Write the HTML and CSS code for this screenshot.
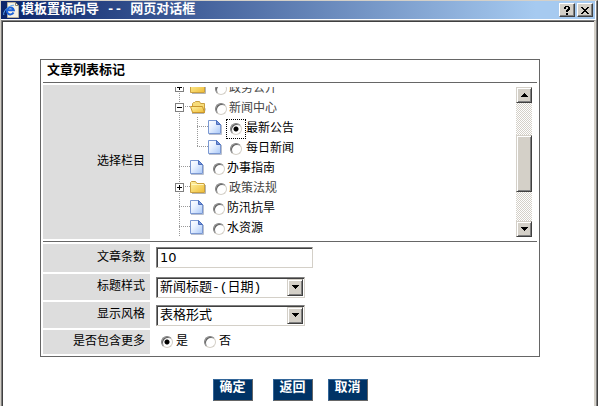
FILE: index.html
```
<!DOCTYPE html>
<html lang="zh-CN">
  <head>
    <meta charset="UTF-8" />
    <meta name="viewport" content="width=device-width, initial-scale=1.0" />
    <title>模板置标向导</title>
    <link rel="stylesheet" href="styles.css">
  </head>
  <body>
    <svg class="sprite" aria-hidden="true">
      <defs>
        <linearGradient id="paper" x1="0" y1="0" x2="1" y2="1">
          <stop offset="0" stop-color="#ffffff" />
          <stop offset="0.4" stop-color="#eaf2ff" />
          <stop offset="1" stop-color="#a9c8f8" />
        </linearGradient>
        <linearGradient id="gold" x1="0" y1="0" x2="1" y2="1">
          <stop offset="0" stop-color="#fff3a4" />
          <stop offset="1" stop-color="#efbd36" />
        </linearGradient>
      </defs>
      <symbol id="page" viewBox="0 0 16 16">
        <path d="M1 15.5h12.500V6" fill="none" stroke="#b9bfcc" />
        <path d="M.5 1.500h8l4 4v9H.500z" fill="url(#paper)" stroke="#7b98d2" />
        <path d="M8.500 1.500v4h4z" fill="#7795da" stroke="#4c6fbd" />
      </symbol>
      <symbol id="folder" viewBox="0 0 16 16">
        <path d="M2 14.500h13.500V6" fill="none" stroke="#b5b5b5" />
        <path d="M.5 13.500v-10l1-1h4l1.500 2h7l.5.500v8.500z" fill="url(#gold)" stroke="#c9a040" />
        <path d="M1.500 5.500h12" stroke="#fff7c4" />
      </symbol>
      <symbol id="folder-open" viewBox="0 0 16 16">
        <path d="M2 14.500h12l1.500-5" fill="none" stroke="#b5b5b5" />
        <path d="M2.500 13.500v-9l1-1h1l1-1h4l1 2h4v9z" fill="#f7dc78" stroke="#c9a040" />
        <path d="M.500 7.500h12l2 6h-12z" fill="url(#gold)" stroke="#c9962c" />
      </symbol>
      <symbol id="up" viewBox="0 0 7 4">
        <path d="M3 0h1v1h1v1h1v1h1v1H0V3h1V2h1V1h1z" />
      </symbol>
      <symbol id="down" viewBox="0 0 7 4">
        <path d="M0 0h7v1H6v1H5v1H4v1H3V3H2V2H1V1H0z" />
      </symbol>
    </svg>

    <div class="dialog">
      <header class="titlebar">
        <svg class="logo" viewBox="0 0 16 16" aria-hidden="true">
          <path d="M4.500.500h8l3 3v12h-11z" fill="#f4f1e6" stroke="#b5b09c" />
          <path d="M12.500.500v3h3z" fill="#fff" stroke="#8c8672" />
          <path d="M10.500 10.500a3.500 3.500 0 1 1 .3-2.300H4" fill="none" stroke="#1c62d8" stroke-width="2" />
          <path d="M.800 13C-.500 9.500 6 3 11 3.200" fill="none" stroke="#5aa7f5" />
        </svg>
        <h1>模板置标向导 -- 网页对话框</h1>
        <button type="button" class="winbtn" aria-label="帮助">
          <svg width="7" height="9" viewBox="0 0 7 9"><path d="M1 0h4v1h1v3H5v1H4v1H2V4h1V3h1V1H2v2H0V1h1zM2 7h2v2H2z" /></svg>
        </button>
        <button type="button" class="winbtn" aria-label="关闭">
          <svg width="8" height="7" viewBox="0 0 8 7"><path d="M0 0h2v1h1v1h2V1h1V0h2v1H7v1H6v1H5v1h1v1h1v1h1v1H6V6H5V5H3v1H2v1H0V6h1V5h1V4h1V3H2V2H1V1H0z" /></svg>
        </button>
      </header>

      <form class="content">
        <div class="panel">
          <h2>文章列表标记</h2>

          <div class="row row-tree">
            <div class="label" id="column-label">选择栏目</div>
            <div class="tree-box">
              <ul class="tree" role="radiogroup" aria-labelledby="column-label">
                <li class="node folder">
                  <button type="button" class="toggle plus" aria-label="展开"></button>
                  <svg class="icon"><use href="#folder" /></svg>
                  <label><input type="radio" name="column" />政务公开</label>
                </li>
                <li class="node folder">
                  <button type="button" class="toggle" aria-label="折叠"></button>
                  <svg class="icon"><use href="#folder-open" /></svg>
                  <label><input type="radio" name="column" />新闻中心</label>
                </li>
                <li class="branch">
                  <ul>
                    <li class="node">
                      <svg class="icon"><use href="#page" /></svg>
                      <label><span class="focus"><input type="radio" name="column" checked /></span>最新公告</label>
                    </li>
                    <li class="node last">
                      <svg class="icon"><use href="#page" /></svg>
                      <label><span class="focus-off"><input type="radio" name="column" /></span>每日新闻</label>
                    </li>
                  </ul>
                </li>
                <li class="node">
                  <svg class="icon"><use href="#page" /></svg>
                  <label><input type="radio" name="column" />办事指南</label>
                </li>
                <li class="node folder">
                  <button type="button" class="toggle plus" aria-label="展开"></button>
                  <svg class="icon"><use href="#folder" /></svg>
                  <label><input type="radio" name="column" />政策法规</label>
                </li>
                <li class="node">
                  <svg class="icon"><use href="#page" /></svg>
                  <label><input type="radio" name="column" />防汛抗旱</label>
                </li>
                <li class="node">
                  <svg class="icon"><use href="#page" /></svg>
                  <label><input type="radio" name="column" />水资源</label>
                </li>
              </ul>
              <div class="scrollbar">
                <button type="button" class="scroll-btn" aria-label="向上"><svg width="7" height="4"><use href="#up" /></svg></button>
                <div class="space-above"></div>
                <div class="thumb"></div>
                <div class="space-below"></div>
                <button type="button" class="scroll-btn" aria-label="向下"><svg width="7" height="4"><use href="#down" /></svg></button>
              </div>
            </div>
          </div>

          <div class="row">
            <label class="label" for="count">文章条数</label>
            <div class="field"><input type="text" id="count" value="10" /></div>
          </div>
          <div class="row">
            <label class="label" for="title-style">标题样式</label>
            <div class="field">
              <span class="select">
                <select id="title-style"><option>新闻标题-(日期)</option></select>
                <span class="arrow"><svg width="7" height="4"><use href="#down" /></svg></span>
              </span>
            </div>
          </div>
          <div class="row">
            <label class="label" for="display">显示风格</label>
            <div class="field">
              <span class="select">
                <select id="display"><option>表格形式</option></select>
                <span class="arrow"><svg width="7" height="4"><use href="#down" /></svg></span>
              </span>
            </div>
          </div>
          <div class="row row-more">
            <div class="label" id="more-label">是否包含更多</div>
            <div class="field radios" role="radiogroup" aria-labelledby="more-label">
              <label><input type="radio" name="more" checked />是</label>
              <label><input type="radio" name="more" />否</label>
            </div>
          </div>
        </div>

        <div class="actions">
          <button type="button">确定</button>
          <button type="button" class="back">返回</button>
          <button type="button">取消</button>
        </div>
      </form>
    </div>
  </body>
</html>
```
FILE: styles.css
```
* {
  box-sizing: border-box;
  margin: 0;
  padding: 0;
}

body {
  background: #fff;
  color: #000;
  font-family: "Liberation Mono", "Noto Sans CJK SC", monospace;
  font-size: 12px;
  line-height: 16px;
}

button,
input,
select {
  font-family: inherit;
}

ul {
  list-style: none;
}

.sprite {
  position: absolute;
  width: 0;
  height: 0;
}

/* window frame */
.dialog {
  display: flex;
  flex-direction: column;
  min-height: 100vh;
  border-left: 1px solid #d4d0c8;
  border-right: 1px solid #404040;
  border-top: 1px solid #d4d0c8;
  box-shadow: inset -1px 0 #808080;
  padding-right: 1px;
}

.titlebar {
  display: flex;
  align-items: center;
  height: 18px;
  padding: 0 2px;
  margin-right: 1px;
  background: linear-gradient(90deg, #0a246a, #a6caf0 90%);
}

.titlebar h1 {
  flex: 1;
  margin-left: 2px;
  color: #fff;
  font-size: 13px;
  line-height: 18px;
  white-space: nowrap;
}

.logo {
  width: 16px;
  height: 16px;
}

.winbtn,
.scroll-btn,
.thumb,
.arrow {
  display: flex;
  align-items: center;
  justify-content: center;
  width: 16px;
  background: #d4d0c8;
  border: 1px solid;
  border-color: #d4d0c8 #404040 #404040 #d4d0c8;
  box-shadow: inset 1px 1px #fff, inset -1px -1px #808080;
}

.winbtn {
  height: 14px;
  border-color: #fff #404040 #404040 #fff;
  box-shadow: inset -1px -1px #808080;
}

.winbtn + .winbtn {
  margin-left: 2px;
}

.content {
  flex: 1;
  margin-top: 1px;
  padding: 38px 54px 5px 38px;
  border-style: solid;
  border-width: 1px 2px 0 1px;
  border-color: #808080 #d4d0c8 #fff #808080;
  box-shadow: inset 1px 1px #404040;
}

/* form */
.panel {
  padding: 0 2px 2px;
  border: 1px solid #666;
}

.panel h2 {
  height: 23px;
  padding-left: 4px;
  border-bottom: 1px solid #666;
  font-size: 13px;
  line-height: 21px;
}

.row {
  display: flex;
  min-height: 26px;
  margin-top: 2px;
}

.row-tree {
  margin-top: 0;
  padding: 2px 0;
  border-bottom: 1px solid #666;
}

.row-more {
  min-height: 24px;
}

.label {
  display: flex;
  align-items: center;
  justify-content: flex-end;
  flex: none;
  width: 107px;
  padding: 0 5px 0 0;
  background: #ddd;
}

.field {
  display: flex;
  flex: 1;
  align-items: center;
  padding: 2px 6px;
}

input[type="text"],
select {
  height: 21px;
  padding-left: 3px;
  background: #fff;
  border: 1px solid;
  border-color: #808080 #d4d0c8 #d4d0c8 #808080;
  border-radius: 0;
  box-shadow: inset 1px 1px #404040;
  color: #000;
  font-size: 13px;
  outline: none;
}

input[type="text"] {
  width: 157px;
  margin: 1px 0 2px;
  font-family: "DejaVu Sans", sans-serif;
}

select {
  width: 149px;
  appearance: none;
}

.select {
  position: relative;
  display: flex;
}

.arrow {
  position: absolute;
  top: 2px;
  right: 2px;
  bottom: 2px;
  pointer-events: none;
}

input[type="radio"] {
  flex: none;
  width: 12px;
  height: 12px;
  appearance: none;
  background: #fff;
  border: 1px solid;
  border-color: #808080 #d4d0c8 #d4d0c8 #808080;
  border-radius: 50%;
  box-shadow: inset 1px 1px #606060;
}

input[type="radio"]:checked {
  background: radial-gradient(circle, #000 2px, #fff 3px);
}

.radios {
  gap: 16px;
  padding-left: 11px;
}

.radios label {
  display: flex;
  align-items: center;
  gap: 3px;
}

/* column tree */
.tree-box {
  display: flex;
  flex: 1;
  height: 154px;
  padding: 2px 5px 2px 22px;
}

.tree {
  display: flex;
  flex: 1;
  flex-direction: column;
  justify-content: flex-end;
  padding-left: 4px;
  overflow: hidden;
}

.node,
.node label {
  display: flex;
  flex: none;
  align-items: center;
}

.node {
  height: 20px;
  padding-left: 14px;
  background:
    repeating-linear-gradient(#999 0 1px, transparent 1px 2px) 3px 0 / 1px 100% no-repeat,
    repeating-linear-gradient(90deg, #999 0 1px, transparent 1px 2px) 3px 9px / 11px 1px no-repeat;
}

.node.last {
  background-size: 1px 10px, 11px 1px;
}

.node label {
  margin-left: 7px;
  padding-top: 3px;
  gap: 2px;
}

.node.folder {
  padding-left: 0;
}

.folder label {
  margin-left: 9px;
  color: #444;
}

.icon {
  flex: none;
  width: 16px;
  height: 16px;
}

.toggle {
  flex: none;
  width: 9px;
  height: 9px;
  margin-left: -1px;
  margin-right: 6px;
  border: 1px solid #808080;
  background: linear-gradient(#000, #000) center / 5px 1px no-repeat #fff;
}

.toggle.plus {
  background:
    linear-gradient(#000, #000) center / 5px 1px no-repeat,
    linear-gradient(#000, #000) center / 1px 5px no-repeat,
    #fff;
}

.branch {
  flex: none;
  padding-left: 18px;
  background: repeating-linear-gradient(#999 0 1px, transparent 1px 2px) 3px 0 / 1px 100% no-repeat;
}

.branch .node label {
  margin-left: 2px;
  gap: 0;
}

.focus,
.focus-off {
  display: flex;
  align-items: center;
  justify-content: center;
  width: 20px;
  height: 20px;
  border: 1px dotted #000;
}

.focus-off {
  border-color: transparent;
}

.scrollbar {
  display: flex;
  flex-direction: column;
  width: 16px;
  background: repeating-conic-gradient(#d4d0c8 0 25%, #fff 0 50%) 0 0 / 2px 2px;
}

.scroll-btn {
  flex: none;
  height: 16px;
}

.thumb {
  flex: 56;
}

.space-above {
  flex: 33;
}

.space-below {
  flex: 29;
}

/* bottom buttons */
.actions {
  display: flex;
  justify-content: center;
  margin-top: 22px;
}

.actions button {
  width: 40px;
  height: 22px;
  padding-bottom: 4px;
  background: #036;
  border: 1px solid;
  border-color: #369 #666 #666 #369;
  color: #fff;
  font-size: 13px;
  font-weight: bold;
  line-height: 16px;
}

.actions .back {
  margin: 0 15px 0 20px;
}
```
